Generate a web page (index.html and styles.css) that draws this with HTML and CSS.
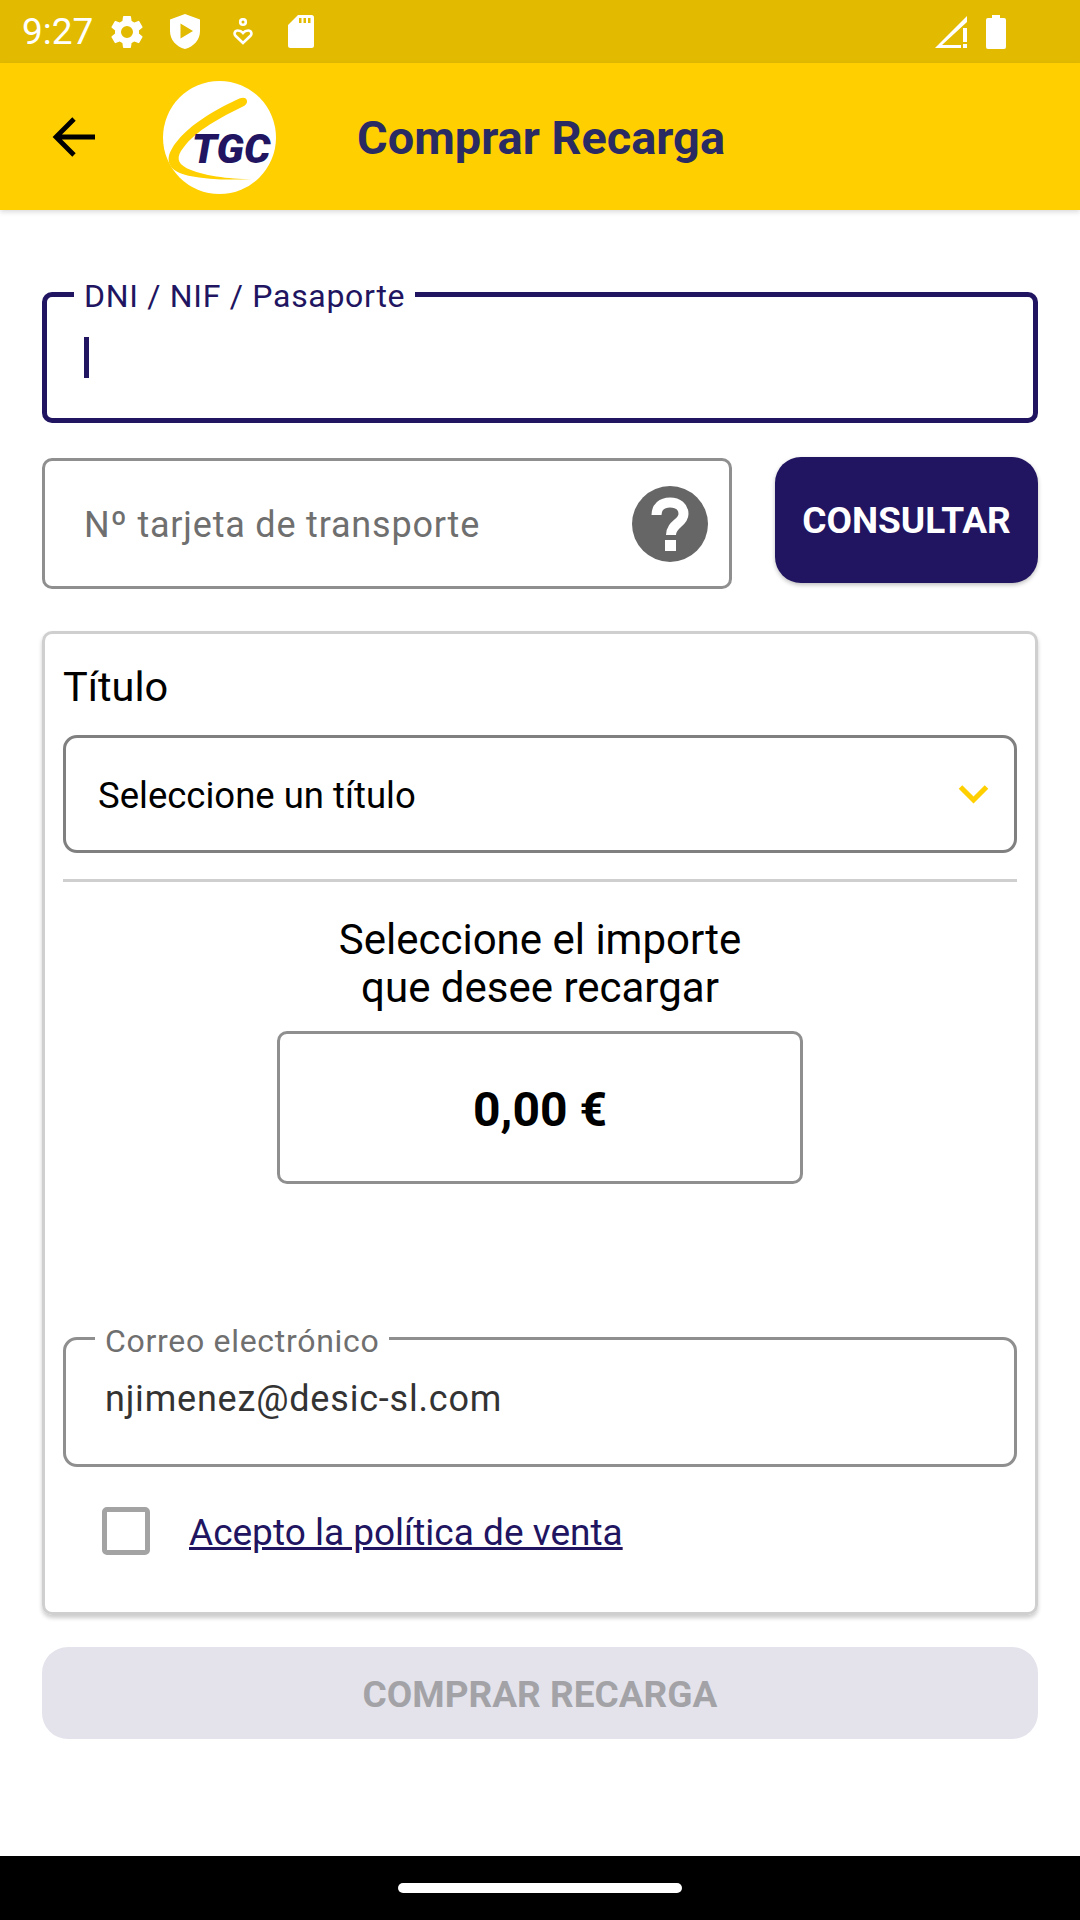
FILE: index.html
```html
<!DOCTYPE html>
<html lang="es">
<head>
  <meta charset="UTF-8">
  <meta name="viewport" content="width=device-width, initial-scale=1.0">
  <title>Comprar Recarga</title>
  <link rel="stylesheet" href="styles.css">
</head>
<body>
  <div class="screen">
    <!-- barra de estado -->
    <div class="status-bar">
      <span class="time">9:27</span>
      <svg class="ico-gear" viewBox="0 0 24 24"><path d="M19.14 12.94c.04-.3.06-.61.06-.94s-.02-.64-.07-.94l2.03-1.58a.49.49 0 0 0 .12-.61l-1.92-3.32a.49.49 0 0 0-.59-.22l-2.39.96a7 7 0 0 0-1.62-.94l-.36-2.54a.48.48 0 0 0-.48-.41h-3.84a.47.47 0 0 0-.47.41l-.36 2.54c-.59.24-1.13.57-1.62.94l-2.39-.96a.49.49 0 0 0-.59.22L2.74 8.87a.48.48 0 0 0 .12.61l2.03 1.58c-.05.3-.09.63-.09.94s.02.64.07.94l-2.03 1.58a.49.49 0 0 0-.12.61l1.92 3.32c.12.22.37.29.59.22l2.39-.96c.5.38 1.03.7 1.62.94l.36 2.54c.05.24.24.41.48.41h3.84c.24 0 .44-.17.47-.41l.36-2.54c.59-.24 1.13-.56 1.62-.94l2.39.96c.22.08.47 0 .59-.22l1.92-3.32a.48.48 0 0 0-.12-.61l-2.01-1.58zM12 15.6a3.6 3.6 0 1 1 0-7.2 3.6 3.6 0 0 1 0 7.2z"/></svg>
      <svg class="ico-shield" viewBox="0 0 30 35"><path fill-rule="evenodd" d="M15 0 30 5.500V17c0 8.800-6.200 15.600-15 18C6.200 32.600 0 25.800 0 17V5.500zM10.500 9.500v15L23 17z"/></svg>
      <svg class="ico-heart" viewBox="0 0 20 27" fill="none" stroke="#fff" stroke-width="2.600"><circle cx="10" cy="4" r="2.800"/><path d="M10 25 2.500 17.800C.8 16 1.500 12.500 4.800 12.500 7 12.500 8.800 13.500 10 15 11.200 13.500 13 12.500 15.200 12.500 18.500 12.500 19.200 16 17.500 17.800z"/></svg>
      <svg class="ico-sd" viewBox="0 0 26 33"><path fill-rule="evenodd" d="M10 0H23.500A2.500 2.500 0 0 1 26 2.500V30.500A2.500 2.500 0 0 1 23.500 33H2.500A2.500 2.500 0 0 1 0 30.500V10zM11 3V8H13.500V3zM15.500 3V8H18V3zM20 3V8H22.500V3z"/></svg>
      <span class="status-gap"></span>
      <svg class="ico-signal" viewBox="0 0 32 32"><path d="M32 0V6L7 29H26V32H0zM28 12H32V26H28zM28 28H32V32H28z"/></svg>
      <svg class="ico-battery" viewBox="0 0 20 34"><path d="M6 0H14V3H18A2 2 0 0 1 20 5V32A2 2 0 0 1 18 34H2A2 2 0 0 1 0 32V5A2 2 0 0 1 2 3H6z"/></svg>
    </div>

    <!-- barra superior -->
    <header class="app-bar">
      <svg class="back-arrow" viewBox="0 0 44 44" fill="none" stroke="#000" stroke-width="4.800"><path d="M43 22H4M22 4 4 22 22 40"/></svg>
      <svg class="logo" viewBox="45 33 333 333">
        <circle cx="211.500" cy="199.500" r="166.500" fill="#fff"/>
        <path fill="#ffcf00" d="M272 84C205 115 110 165 70 235 50 270 65 300 120 312 180 325 250 325 305 322 240 322 160 312 115 290 85 275 85 255 105 230 140 180 215 140 285 106 300 95 292 76 272 84Z"/>
        <text class="logo-text" x="130" y="275">TGC</text>
      </svg>
      <h1>Comprar Recarga</h1>
    </header>

    <main class="content">
      <div class="field field-focus">
        <label>DNI / NIF / Pasaporte</label>
        <span class="caret"></span>
      </div>

      <div class="card-row">
        <div class="field field-card">
          <span class="placeholder">Nº tarjeta de transporte</span>
          <svg class="help-icon" viewBox="0 0 76 76">
            <circle cx="38" cy="38" r="38" fill="#666"/>
            <path fill="none" stroke="#fff" stroke-width="10" d="M24.500 29C24.500 21 30 16.500 38 16.500 46 16.500 51.500 21 51.500 28 51.500 37 39 38 39 49"/>
            <rect x="33" y="54" width="11" height="11" fill="#fff"/>
          </svg>
        </div>
        <button class="btn-consultar">CONSULTAR</button>
      </div>

      <section class="card">
        <h2>Título</h2>
        <div class="select">
          <span>Seleccione un título</span>
          <svg class="chevron" viewBox="0 0 30 20" fill="none" stroke="#ffcf00" stroke-width="5"><path d="M2 3 15 16 28 3"/></svg>
        </div>
        <hr class="divider">
        <p class="amount-title">Seleccione el importe<br>que desee recargar</p>
        <div class="amount">0,00 €</div>
        <div class="field field-mail">
          <label>Correo electrónico</label>
          <span class="mail-value">njimenez@desic-sl.com</span>
        </div>
        <div class="policy">
          <span class="checkbox"></span>
          <a href="#">Acepto la política de venta</a>
        </div>
      </section>

      <button class="btn-comprar" disabled>COMPRAR RECARGA</button>
    </main>

    <!-- barra de navegacion -->
    <div class="nav-bar"><span class="home-pill"></span></div>
  </div>
</body>
</html>
```

FILE: styles.css
```css
* {
  box-sizing: border-box;
}
body {
  margin: 0;
  background-color: #fff;
  font-family: Roboto, sans-serif;
  color: #000;
}
.screen {
  width: 1080px;
  height: 1920px;
  display: flex;
  flex-direction: column;
  overflow: hidden;
}

/* barra de estado */
.status-bar {
  height: 63px;
  flex: none;
  display: flex;
  align-items: center;
  padding: 0 74px 0 22px;
  background-color: #e2bb00;
  color: #fff;
}
.status-bar svg {
  flex: none;
  fill: #fff;
}
.time {
  font-size: 37px;
  width: 71px;
}
.ico-gear {
  width: 40px;
  height: 40px;
  margin-left: 14px;
}
.ico-shield {
  width: 30px;
  height: 35px;
  margin-left: 23px;
}
.ico-heart {
  width: 20px;
  height: 27px;
  margin-left: 33px;
  fill: none !important;
}
.ico-sd {
  width: 26px;
  height: 33px;
  margin-left: 35px;
}
.status-gap {
  flex: 1;
}
.ico-signal {
  width: 32px;
  height: 32px;
}
.ico-battery {
  width: 20px;
  height: 34px;
  margin-left: 19px;
}

/* barra superior */
.app-bar {
  height: 147px;
  flex: none;
  display: flex;
  align-items: center;
  padding-left: 52px;
  background-color: #ffcf00;
  box-shadow: 0 2px 5px rgba(0, 0, 0, 0.15);
  position: relative;
}
.back-arrow {
  width: 44px;
  height: 44px;
  flex: none;
}
.logo {
  width: 113px;
  height: 113px;
  flex: none;
  margin: 1px 0 0 67px;
}
.logo-text {
  font-family: Roboto, sans-serif;
  font-size: 122px;
  font-weight: 900;
  font-style: italic;
  fill: #211561;
}
.app-bar h1 {
  margin: 2px 0 0 81px;
  font-size: 46.900px;
  font-weight: 700;
  color: #2b2b63;
}

.content {
  flex: 1;
  padding: 82px 42px 0;
}

/* campos */
.field {
  position: relative;
  border: 3px solid #8f8f8f;
  border-radius: 10px;
  background-color: #fff;
}
.field label {
  position: absolute;
  top: -17px;
  background-color: #fff;
  font-size: 32px;
  line-height: 36px;
  letter-spacing: 0.7px;
  padding: 0 10px;
}
.field-focus {
  height: 131px;
  border: 5px solid #211561;
}
.field-focus label {
  left: 27px;
  top: -19px;
  color: #211561;
}
.caret {
  position: absolute;
  left: 37px;
  top: 40px;
  width: 5px;
  height: 41px;
  background-color: #211561;
}
.card-row {
  display: flex;
  align-items: flex-start;
  gap: 43px;
  margin-top: 35px;
}
.field-card {
  flex: 1;
  height: 131px;
  display: flex;
  align-items: center;
  justify-content: space-between;
  padding: 0 21px 0 39px;
}
.placeholder {
  font-size: 36px;
  color: #6f6f6f;
  letter-spacing: 0.8px;
  margin-top: 2px;
}
.help-icon {
  width: 76px;
  height: 76px;
  flex: none;
}
.btn-consultar {
  width: 263px;
  height: 126px;
  margin-top: -1px;
  padding-top: 2px;
  border: none;
  border-radius: 26px;
  background-color: #211561;
  color: #fff;
  font-family: Roboto, sans-serif;
  font-size: 37px;
  font-weight: 700;
  box-shadow: 0 2px 4px rgba(0, 0, 0, 0.25);
}

/* tarjeta */
.card {
  height: 984px;
  margin-top: 42px;
  padding: 0 18px;
  border: 3px solid #cfcfcf;
  border-radius: 10px;
  box-shadow: 0 3px 4px rgba(0, 0, 0, 0.2);
}
.card h2 {
  margin: 29px 0 0;
  font-size: 41.500px;
  font-weight: 400;
  line-height: 48px;
}
.select {
  height: 118px;
  margin-top: 24px;
  display: flex;
  align-items: center;
  justify-content: space-between;
  padding: 0 25px 0 32px;
  border: 3px solid #808080;
  border-radius: 14px;
  font-size: 36.500px;
}
.select span {
  margin-top: 3px;
}
.chevron {
  width: 31px;
  height: 20px;
}
.divider {
  height: 3px;
  margin: 26px 0 0;
  border: none;
  background-color: #cfcfcf;
}
.amount-title {
  margin: 34px 0 0;
  text-align: center;
  font-size: 42px;
  line-height: 48px;
}
.amount {
  width: 526px;
  height: 153px;
  margin: 19px auto 0;
  padding-top: 4px;
  display: flex;
  align-items: center;
  justify-content: center;
  border: 3px solid #8f8f8f;
  border-radius: 10px;
  font-size: 48px;
  font-weight: 700;
}
.field-mail {
  height: 130px;
  margin-top: 153px;
  padding: 35px 0 0 39px;
  border-radius: 14px;
}
.field-mail label {
  left: 29px;
  color: #6f6f6f;
}
.mail-value {
  font-size: 36px;
  line-height: 48px;
  color: #333;
  letter-spacing: 0.8px;
}
.policy {
  display: flex;
  align-items: center;
  gap: 39px;
  margin: 40px 0 0 39px;
}
.checkbox {
  width: 48px;
  height: 48px;
  flex: none;
  border: 5px solid #a3a3a3;
  border-radius: 5px;
}
.policy a {
  margin-top: 2px;
  font-size: 37px;
  color: #211561;
}
.btn-comprar {
  display: block;
  width: 100%;
  height: 92px;
  margin-top: 32px;
  padding-top: 3px;
  border: none;
  border-radius: 26px;
  background-color: #e4e3ec;
  color: #a3a3a7;
  font-family: Roboto, sans-serif;
  font-size: 37px;
  font-weight: 700;
}

/* barra de navegacion */
.nav-bar {
  height: 64px;
  flex: none;
  display: flex;
  align-items: center;
  justify-content: center;
  background-color: #000;
}
.home-pill {
  width: 284px;
  height: 10px;
  border-radius: 5px;
  background-color: #fff;
}
```
